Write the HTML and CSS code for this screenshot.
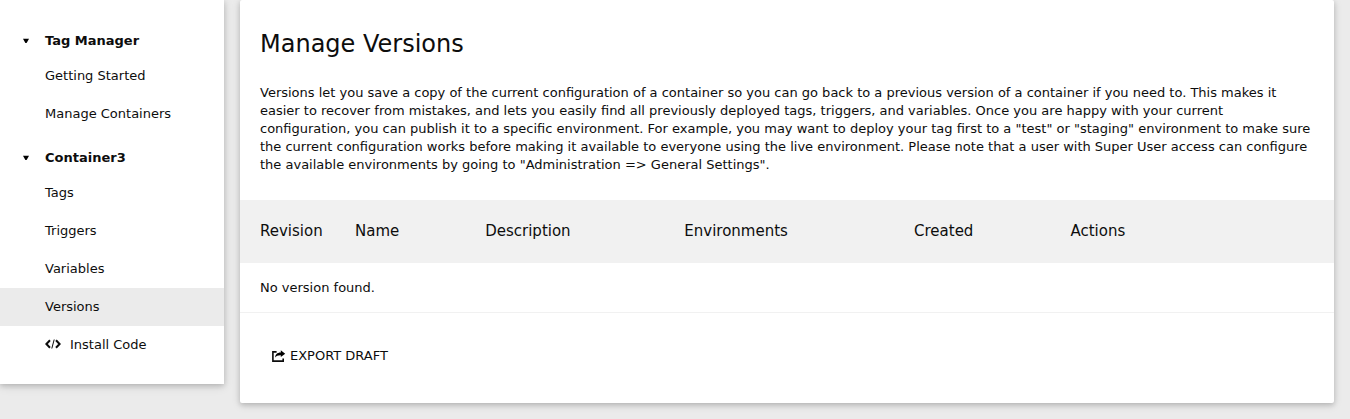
FILE: index.html
```html
<!DOCTYPE html>
<html lang="en">
<head>
<meta charset="utf-8">
<title>Manage Versions</title>
<link rel="stylesheet" href="styles.css">
</head>
<body>
<div class="page">
  <nav class="sidebar" aria-label="Tag Manager">
    <button class="menu-heading" type="button" aria-expanded="true"><svg class="caret" viewBox="0 0 6 7" aria-hidden="true"><path d="M0 0.8h6L3.6 5H2.4z"/></svg>Tag Manager</button>
    <ul class="menu">
      <li><a class="menu-link" href="#start">Getting Started</a></li>
      <li><a class="menu-link" href="#containers">Manage Containers</a></li>
    </ul>
    <button class="menu-heading" type="button" aria-expanded="true"><svg class="caret" viewBox="0 0 6 7" aria-hidden="true"><path d="M0 0.8h6L3.6 5H2.4z"/></svg>Container3</button>
    <ul class="menu">
      <li><a class="menu-link" href="#tags">Tags</a></li>
      <li><a class="menu-link" href="#triggers">Triggers</a></li>
      <li><a class="menu-link" href="#variables">Variables</a></li>
      <li><a class="menu-link menu-link-active" href="#versions" aria-current="page">Versions</a></li>
      <li><a class="menu-link" href="#install"><svg class="code-icon" viewBox="0 0 16 12" aria-hidden="true"><path d="M5 1.3L1.4 5L5 8.7M11 1.3L14.6 5L11 8.7" stroke-width="2"/><path d="M9.2 0.5L6.8 9.5" stroke-width="1"/></svg>Install Code</a></li>
    </ul>
  </nav>
  <main class="card">
    <h1 class="title">Manage Versions</h1>
    <p class="intro">Versions let you save a copy of the current configuration of a container so you can go back to a previous version of a container if you need to. This makes it easier to recover from mistakes, and lets you easily find all previously deployed tags, triggers, and variables. Once you are happy with your current configuration, you can publish it to a specific environment. For example, you may want to deploy your tag first to a "test" or "staging" environment to make sure the current configuration works before making it available to everyone using the live environment. Please note that a user with Super User access can configure the available environments by going to "Administration =&gt; General Settings".</p>
    <table class="versions">
      <thead>
        <tr>
          <th class="col-revision">Revision</th>
          <th class="col-name">Name</th>
          <th class="col-description">Description</th>
          <th class="col-environments">Environments</th>
          <th class="col-created">Created</th>
          <th>Actions</th>
        </tr>
      </thead>
      <tbody>
        <tr><td colspan="6">No version found.</td></tr>
      </tbody>
    </table>
    <div class="actions">
      <button class="export" type="button"><svg class="export-icon" viewBox="0 0 14 12" aria-hidden="true"><path class="export-box" d="M4.6 1.9H0.9v9.2h10.3V8.4"/><path d="M8.8 0.3L13.2 3.7L8.8 7.1V5.2C6 5.1 4.3 5.9 3.2 7.4C3.2 4.4 5 2.5 8.8 2.4z"/></svg>EXPORT DRAFT</button>
    </div>
  </main>
</div>
</body>
</html>
```
FILE: styles.css
```css
* {
  box-sizing: border-box;
}

body {
  margin: 0;
  background: #ebebeb;
  color: #0d0d0d;
  font: 13px/18px "DejaVu Sans", Verdana, sans-serif;
}

.page {
  display: flex;
  align-items: flex-start;
  gap: 16px;
  padding: 0 16px 16px 0;
}

.sidebar,
.card {
  background: #fff;
  box-shadow: 0 2px 5px rgba(0, 0, 0, 0.16), 0 2px 10px rgba(0, 0, 0, 0.12);
}

.sidebar {
  flex: 0 0 224px;
  padding: 16px 0 20px;
}

.menu-heading {
  display: flex;
  align-items: center;
  width: 100%;
  padding: 16px 16px 7px 23px;
  border: 0;
  background: none;
  color: inherit;
  font: inherit;
  font-weight: bold;
  text-align: left;
}

.caret {
  width: 6px;
  height: 7px;
  margin-right: 16px;
}

.menu {
  margin: 0;
  padding: 0;
  list-style: none;
}

.menu-link {
  display: flex;
  align-items: center;
  padding: 10px 16px 10px 45px;
  color: inherit;
  text-decoration: none;
}

.menu-link-active {
  background: #ebebeb;
}

.code-icon {
  width: 16px;
  height: 12px;
  margin-right: 9px;
  fill: none;
  stroke: currentColor;
}

.card {
  flex: 1;
  min-width: 0;
  border-radius: 2px;
}

.title {
  margin: 0;
  padding: 28px 20px 24px;
  font-size: 24px;
  font-weight: normal;
  line-height: 32px;
}

.intro {
  margin: 0;
  padding: 0 20px 26px;
}

.versions {
  width: 100%;
  border-collapse: collapse;
  table-layout: fixed;
}

.versions th {
  padding: 21px 10px;
  background: #f1f1f1;
  font-size: 15px;
  font-weight: normal;
  line-height: 21px;
  text-align: left;
}

.versions td {
  padding: 16px 20px 15px;
  border-bottom: 1px solid #f1f1f1;
}

.versions .col-revision {
  width: 9.6%;
  padding-left: 20px;
}

.col-name {
  width: 11.9%;
}

.col-description {
  width: 18.2%;
}

.col-environments {
  width: 21%;
}

.col-created {
  width: 14.3%;
}

.actions {
  padding: 25px 20px 29px;
}

.export {
  display: flex;
  align-items: center;
  gap: 4px;
  height: 36px;
  padding: 0 12px;
  border: 0;
  background: none;
  color: inherit;
  font: inherit;
}

.export-icon {
  width: 14px;
  height: 12px;
}

.export-box {
  fill: none;
  stroke: currentColor;
  stroke-width: 1.6;
}
```
